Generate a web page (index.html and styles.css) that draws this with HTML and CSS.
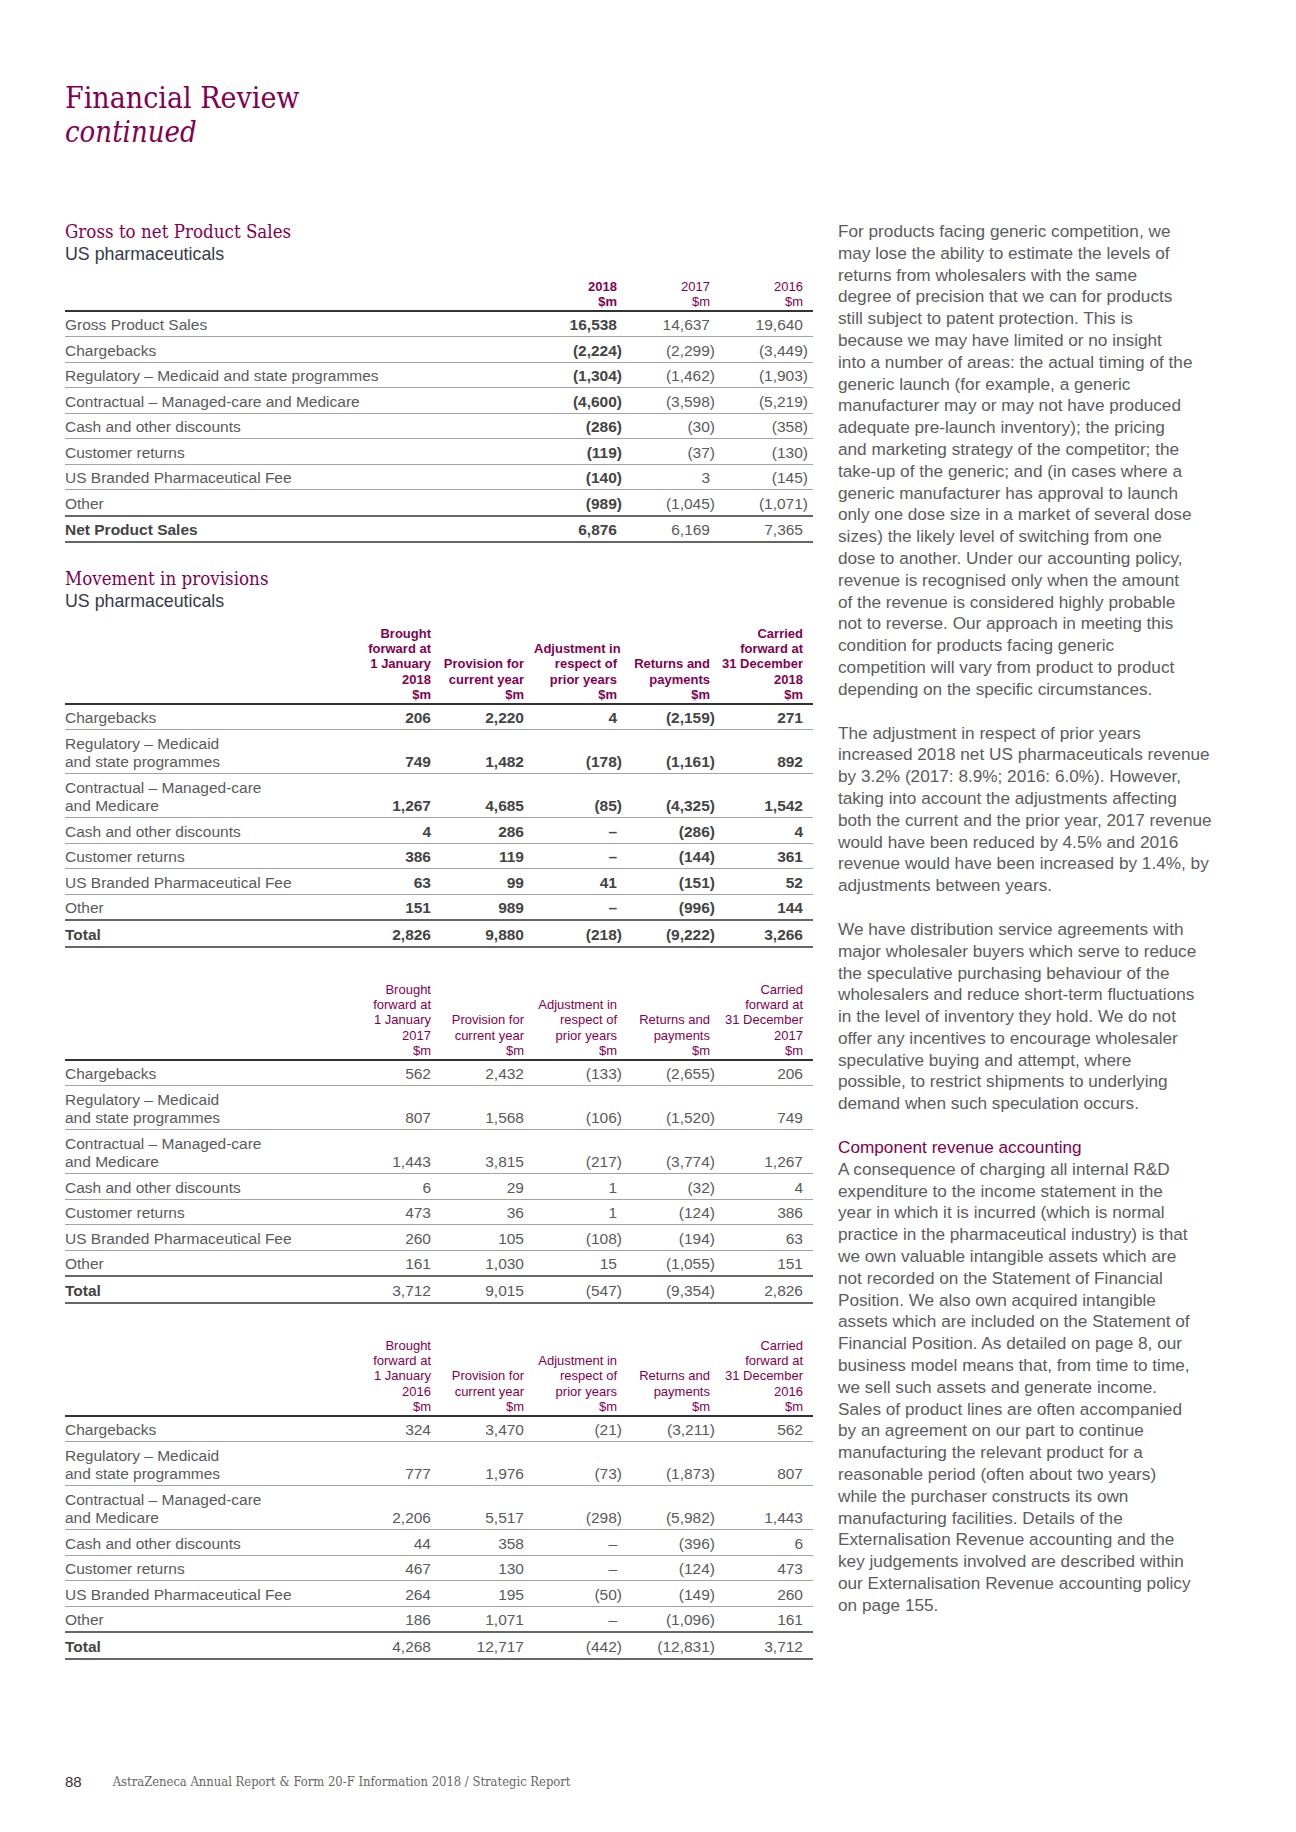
FILE: index.html
```html
<!DOCTYPE html>
<html lang="en">
<head>
<meta charset="utf-8">
<title>Financial Review continued</title>
<link rel="stylesheet" href="styles.css">
</head>
<body>
<div class="page">
  <h1 class="title">Financial Review<em>continued</em></h1>

  <div class="main">
    <div class="left">
      <h2 class="sec">Gross to net Product Sales</h2>
      <p class="sub">US pharmaceuticals</p>
      <table class="fin gross">
        <colgroup><col><col class="c"><col class="c"><col class="c"></colgroup>
        <thead>
          <tr><th></th><th class="b">2018<br>$m</th><th>2017<br>$m</th><th>2016<br>$m</th></tr>
        </thead>
        <tbody>
          <tr><td>Gross Product Sales</td><td class="n b">16,538</td><td class="n">14,637</td><td class="n">19,640</td></tr>
          <tr><td>Chargebacks</td><td class="n b ng">(2,224)</td><td class="n ng">(2,299)</td><td class="n ng">(3,449)</td></tr>
          <tr><td>Regulatory – Medicaid and state programmes</td><td class="n b ng">(1,304)</td><td class="n ng">(1,462)</td><td class="n ng">(1,903)</td></tr>
          <tr><td>Contractual – Managed-care and Medicare</td><td class="n b ng">(4,600)</td><td class="n ng">(3,598)</td><td class="n ng">(5,219)</td></tr>
          <tr><td>Cash and other discounts</td><td class="n b ng">(286)</td><td class="n ng">(30)</td><td class="n ng">(358)</td></tr>
          <tr><td>Customer returns</td><td class="n b ng">(119)</td><td class="n ng">(37)</td><td class="n ng">(130)</td></tr>
          <tr><td>US Branded Pharmaceutical Fee</td><td class="n b ng">(140)</td><td class="n">3</td><td class="n ng">(145)</td></tr>
          <tr><td>Other</td><td class="n b ng">(989)</td><td class="n ng">(1,045)</td><td class="n ng">(1,071)</td></tr>
          <tr class="tot"><td class="b">Net Product Sales</td><td class="n b">6,876</td><td class="n">6,169</td><td class="n">7,365</td></tr>
        </tbody>
      </table>

      <h2 class="sec sec2">Movement in provisions</h2>
      <p class="sub">US pharmaceuticals</p>
      <table class="fin move bold">
        <colgroup><col><col class="c"><col class="c"><col class="c"><col class="c"><col class="c"></colgroup>
        <thead>
          <tr><th></th><th>Brought<br>forward at<br>1 January<br>2018<br>$m</th><th>Provision for<br>current year<br>$m</th><th>Adjustment in<br>respect of<br>prior years<br>$m</th><th>Returns and<br>payments<br>$m</th><th>Carried<br>forward at<br>31 December<br>2018<br>$m</th></tr>
        </thead>
        <tbody>
          <tr><td>Chargebacks</td><td class="n">206</td><td class="n">2,220</td><td class="n">4</td><td class="n ng">(2,159)</td><td class="n">271</td></tr>
          <tr><td>Regulatory – Medicaid<br>and state programmes</td><td class="n">749</td><td class="n">1,482</td><td class="n ng">(178)</td><td class="n ng">(1,161)</td><td class="n">892</td></tr>
          <tr><td>Contractual – Managed-care<br>and Medicare</td><td class="n">1,267</td><td class="n">4,685</td><td class="n ng">(85)</td><td class="n ng">(4,325)</td><td class="n">1,542</td></tr>
          <tr><td>Cash and other discounts</td><td class="n">4</td><td class="n">286</td><td class="n">–</td><td class="n ng">(286)</td><td class="n">4</td></tr>
          <tr><td>Customer returns</td><td class="n">386</td><td class="n">119</td><td class="n">–</td><td class="n ng">(144)</td><td class="n">361</td></tr>
          <tr><td>US Branded Pharmaceutical Fee</td><td class="n">63</td><td class="n">99</td><td class="n">41</td><td class="n ng">(151)</td><td class="n">52</td></tr>
          <tr><td>Other</td><td class="n">151</td><td class="n">989</td><td class="n">–</td><td class="n ng">(996)</td><td class="n">144</td></tr>
          <tr class="tot"><td class="b">Total</td><td class="n">2,826</td><td class="n">9,880</td><td class="n ng">(218)</td><td class="n ng">(9,222)</td><td class="n">3,266</td></tr>
        </tbody>
      </table>

      <table class="fin move next">
        <colgroup><col><col class="c"><col class="c"><col class="c"><col class="c"><col class="c"></colgroup>
        <thead>
          <tr><th></th><th>Brought<br>forward at<br>1 January<br>2017<br>$m</th><th>Provision for<br>current year<br>$m</th><th>Adjustment in<br>respect of<br>prior years<br>$m</th><th>Returns and<br>payments<br>$m</th><th>Carried<br>forward at<br>31 December<br>2017<br>$m</th></tr>
        </thead>
        <tbody>
          <tr><td>Chargebacks</td><td class="n">562</td><td class="n">2,432</td><td class="n ng">(133)</td><td class="n ng">(2,655)</td><td class="n">206</td></tr>
          <tr><td>Regulatory – Medicaid<br>and state programmes</td><td class="n">807</td><td class="n">1,568</td><td class="n ng">(106)</td><td class="n ng">(1,520)</td><td class="n">749</td></tr>
          <tr><td>Contractual – Managed-care<br>and Medicare</td><td class="n">1,443</td><td class="n">3,815</td><td class="n ng">(217)</td><td class="n ng">(3,774)</td><td class="n">1,267</td></tr>
          <tr><td>Cash and other discounts</td><td class="n">6</td><td class="n">29</td><td class="n">1</td><td class="n ng">(32)</td><td class="n">4</td></tr>
          <tr><td>Customer returns</td><td class="n">473</td><td class="n">36</td><td class="n">1</td><td class="n ng">(124)</td><td class="n">386</td></tr>
          <tr><td>US Branded Pharmaceutical Fee</td><td class="n">260</td><td class="n">105</td><td class="n ng">(108)</td><td class="n ng">(194)</td><td class="n">63</td></tr>
          <tr><td>Other</td><td class="n">161</td><td class="n">1,030</td><td class="n">15</td><td class="n ng">(1,055)</td><td class="n">151</td></tr>
          <tr class="tot"><td class="b">Total</td><td class="n">3,712</td><td class="n">9,015</td><td class="n ng">(547)</td><td class="n ng">(9,354)</td><td class="n">2,826</td></tr>
        </tbody>
      </table>

      <table class="fin move next">
        <colgroup><col><col class="c"><col class="c"><col class="c"><col class="c"><col class="c"></colgroup>
        <thead>
          <tr><th></th><th>Brought<br>forward at<br>1 January<br>2016<br>$m</th><th>Provision for<br>current year<br>$m</th><th>Adjustment in<br>respect of<br>prior years<br>$m</th><th>Returns and<br>payments<br>$m</th><th>Carried<br>forward at<br>31 December<br>2016<br>$m</th></tr>
        </thead>
        <tbody>
          <tr><td>Chargebacks</td><td class="n">324</td><td class="n">3,470</td><td class="n ng">(21)</td><td class="n ng">(3,211)</td><td class="n">562</td></tr>
          <tr><td>Regulatory – Medicaid<br>and state programmes</td><td class="n">777</td><td class="n">1,976</td><td class="n ng">(73)</td><td class="n ng">(1,873)</td><td class="n">807</td></tr>
          <tr><td>Contractual – Managed-care<br>and Medicare</td><td class="n">2,206</td><td class="n">5,517</td><td class="n ng">(298)</td><td class="n ng">(5,982)</td><td class="n">1,443</td></tr>
          <tr><td>Cash and other discounts</td><td class="n">44</td><td class="n">358</td><td class="n">–</td><td class="n ng">(396)</td><td class="n">6</td></tr>
          <tr><td>Customer returns</td><td class="n">467</td><td class="n">130</td><td class="n">–</td><td class="n ng">(124)</td><td class="n">473</td></tr>
          <tr><td>US Branded Pharmaceutical Fee</td><td class="n">264</td><td class="n">195</td><td class="n ng">(50)</td><td class="n ng">(149)</td><td class="n">260</td></tr>
          <tr><td>Other</td><td class="n">186</td><td class="n">1,071</td><td class="n">–</td><td class="n ng">(1,096)</td><td class="n">161</td></tr>
          <tr class="tot"><td class="b">Total</td><td class="n">4,268</td><td class="n">12,717</td><td class="n ng">(442)</td><td class="n ng">(12,831)</td><td class="n">3,712</td></tr>
        </tbody>
      </table>
    </div>

    <div class="right">
      <p>For products facing generic competition, we<br>may lose the ability to estimate the levels of<br>returns from wholesalers with the same<br>degree of precision that we can for products<br>still subject to patent protection. This is<br>because we may have limited or no insight<br>into a number of areas: the actual timing of the<br>generic launch (for example, a generic<br>manufacturer may or may not have produced<br>adequate pre-launch inventory); the pricing<br>and marketing strategy of the competitor; the<br>take-up of the generic; and (in cases where a<br>generic manufacturer has approval to launch<br>only one dose size in a market of several dose<br>sizes) the likely level of switching from one<br>dose to another. Under our accounting policy,<br>revenue is recognised only when the amount<br>of the revenue is considered highly probable<br>not to reverse. Our approach in meeting this<br>condition for products facing generic<br>competition will vary from product to product<br>depending on the specific circumstances.</p>
      <p>The adjustment in respect of prior years<br>increased 2018 net US pharmaceuticals revenue<br>by 3.2% (2017: 8.9%; 2016: 6.0%). However,<br>taking into account the adjustments affecting<br>both the current and the prior year, 2017 revenue<br>would have been reduced by 4.5% and 2016<br>revenue would have been increased by 1.4%, by<br>adjustments between years.</p>
      <p>We have distribution service agreements with<br>major wholesaler buyers which serve to reduce<br>the speculative purchasing behaviour of the<br>wholesalers and reduce short-term fluctuations<br>in the level of inventory they hold. We do not<br>offer any incentives to encourage wholesaler<br>speculative buying and attempt, where<br>possible, to restrict shipments to underlying<br>demand when such speculation occurs.</p>
      <h3 class="rhead">Component revenue accounting</h3>
      <p class="after">A consequence of charging all internal R&amp;D<br>expenditure to the income statement in the<br>year in which it is incurred (which is normal<br>practice in the pharmaceutical industry) is that<br>we own valuable intangible assets which are<br>not recorded on the Statement of Financial<br>Position. We also own acquired intangible<br>assets which are included on the Statement of<br>Financial Position. As detailed on page 8, our<br>business model means that, from time to time,<br>we sell such assets and generate income.<br>Sales of product lines are often accompanied<br>by an agreement on our part to continue<br>manufacturing the relevant product for a<br>reasonable period (often about two years)<br>while the purchaser constructs its own<br>manufacturing facilities. Details of the<br>Externalisation Revenue accounting and the<br>key judgements involved are described within<br>our Externalisation Revenue accounting policy<br>on page 155.</p>
    </div>
  </div>

  <footer class="foot">
    <span class="pg">88</span>
    <span class="ft">AstraZeneca Annual Report &amp; Form 20-F Information 2018 / Strategic Report</span>
  </footer>
</div>
</body>
</html>
```

FILE: styles.css
```css
* { box-sizing: border-box; }
html, body { margin: 0; padding: 0; background: #fff; }
body {
  font-family: "Liberation Sans", Arial, sans-serif;
  color: #58595b;
}
.page {
  width: 1296px;
  height: 1832px;
  padding: 80px 0 0 65px;
  display: flex;
  flex-direction: column;
}
.title {
  margin: 0;
  font-family: "DejaVu Serif Condensed", "DejaVu Serif", serif;
  font-weight: normal;
  font-size: 30px;
  line-height: 35px;
  color: #830051;
}
.title em { display: block; font-style: italic; font-size: 29px; }

.main {
  margin-top: 71px;
  display: grid;
  grid-template-columns: 748px 400px;
  column-gap: 25px;
  align-items: start;
}

.sec {
  margin: 0;
  font-family: "DejaVu Serif Condensed", "DejaVu Serif", serif;
  font-weight: normal;
  font-size: 18.6px;
  line-height: 22px;
  color: #830051;
}
.sec2 { margin-top: 25px; }
.sub {
  margin: 0;
  font-size: 17.8px;
  line-height: 22px;
  color: #363a4a;
}

.fin {
  width: 748px;
  table-layout: fixed;
  border-collapse: collapse;
  margin-top: 13.5px;
  font-size: 15.5px;
}
.fin col.c { width: 93px; }
.fin th {
  font-size: 13px;
  line-height: 15.2px;
  font-weight: normal;
  color: #830051;
  text-align: right;
  vertical-align: bottom;
  padding: 0 10px 1px 0;
  border-bottom: 2px solid #333;
  white-space: nowrap;
}
.fin th.b, .move.bold th { font-weight: bold; }
.fin td {
  padding: 4.5px 0 1.5px;
  line-height: 18.5px;
  border-bottom: 1px solid #a3a3a3;
  vertical-align: bottom;
  color: #5a5a5c;
  white-space: nowrap;
}
.fin td.n { text-align: right; padding-right: 10px; }
.fin td.n.ng { padding-right: 5px; }
.fin td.b, .move.bold td.n { font-weight: bold; color: #444; }
.fin tr.tot td { border-top: 2px solid #666; border-bottom: 2px solid #666; }
.move.next { margin-top: 34px; }

.right p {
  margin: 0 0 22px;
  font-size: 17.2px;
  line-height: 21.8px;
  color: #5c5c5e;
  white-space: nowrap;
}
.right .rhead {
  margin: 0;
  font-size: 17.2px;
  line-height: 21.8px;
  font-weight: normal;
  color: #830051;
}

.foot {
  margin-top: auto;
  margin-bottom: 40px;
  display: flex;
  align-items: center;
  gap: 31px;
  line-height: 20px;
}
.pg { font-size: 15px; color: #333; }
.ft {
  font-family: "DejaVu Serif Condensed", "DejaVu Serif", serif;
  font-size: 12.9px;
  color: #666;
}
```
